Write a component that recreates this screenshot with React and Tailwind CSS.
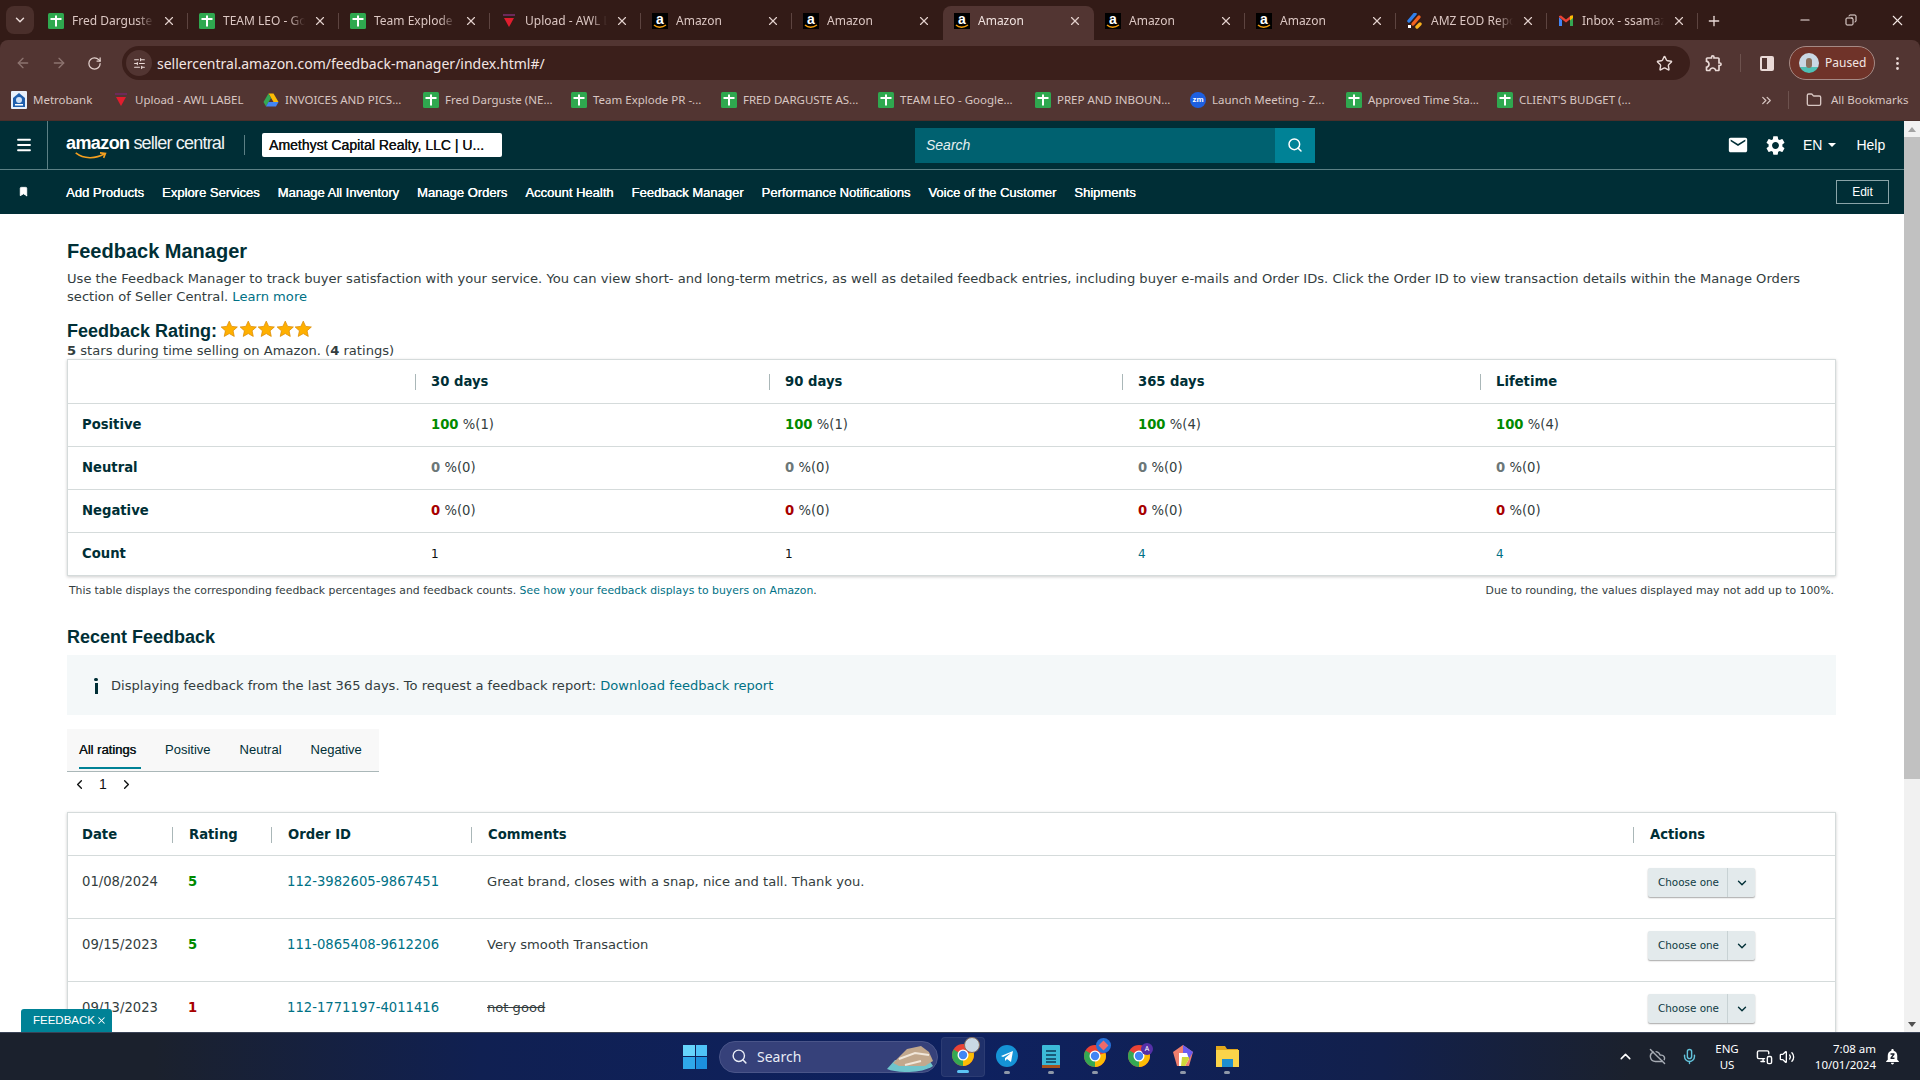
import React from "react";
import { ArrowLeft, ArrowRight, RotateCw, Star, X, Plus, Minus, ChevronDown, ChevronUp, ChevronLeft, ChevronRight, Menu, Search, Bookmark, Folder, ChevronsRight, EllipsisVertical, Mic, Volume2, CloudOff, MonitorSmartphone, SlidersHorizontal, Copy } from "lucide-react";
import { MdEmail, MdSettings, MdOutlineExtension, MdNotificationsPaused } from "react-icons/md";

const Sheets = () => (
  <svg width="16" height="16" viewBox="0 0 16 16" className="shrink-0">
    <rect x="0" y="0" width="16" height="16" rx="1.5" fill="#2fa84f" />
    <rect x="2.500" y="5" width="11" height="2" fill="#fff" />
    <rect x="7" y="2.500" width="2" height="11" fill="#fff" />
  </svg>
);
const Amz = () => (
  <span className="relative w-4 h-4 bg-black shrink-0 flex justify-center text-white font-bold text-[14px] leading-[13px] font-['Liberation_Sans',sans-serif]">
    a
    <svg width="14" height="5" viewBox="0 0 14 5" className="absolute left-[1px] bottom-0"><path d="M1 1c3 3 8 3 12 0" stroke="#f59e0b" strokeWidth="1.4" fill="none" /></svg>
  </span>
);
const Awl = () => (
  <svg width="16" height="16" viewBox="0 0 16 16" className="shrink-0">
    <rect x="2" y="1" width="12" height="2" fill="#6b2a5a" />
    <path d="M3 5h10l-5 9z" fill="#e11d2e" />
  </svg>
);
const Jira = () => (
  <svg width="16" height="16" viewBox="0 0 16 16" className="shrink-0">
    <path d="M2 8l6-7" stroke="#2f80ed" strokeWidth="3.4" strokeLinecap="round" />
    <path d="M6 11l6-7" stroke="#f2621f" strokeWidth="3.4" strokeLinecap="round" />
    <path d="M10 14l3-3" stroke="#f9b21d" strokeWidth="3.4" strokeLinecap="round" />
    <rect x="1" y="12" width="3" height="3" fill="#fff" />
  </svg>
);
const Gmail = () => (
  <svg width="16" height="16" viewBox="0 0 16 16" className="shrink-0">
    <path d="M1 4v9h3V7z" fill="#4285f4" />
    <path d="M15 4v9h-3V7z" fill="#34a853" />
    <path d="M1 4l7 5.5L15 4v-1l-2-.5L8 6.5 3 2.500 1 3z" fill="#ea4335" />
    <path d="M12 3l3-.8V5l-3 2.500z" fill="#fbbc04" />
  </svg>
);
const Drive = () => (
  <svg width="16" height="16" viewBox="0 0 16 16" className="shrink-0">
    <path d="M5.500 1.500h5L15.500 10h-5z" fill="#fbbc04" />
    <path d="M5.500 1.500 .5 10l2.500 4.500L8 6z" fill="#34a853" />
    <path d="M3 14.500h10L15.500 10H5.500z" fill="#4285f4" />
  </svg>
);
const Bank = () => (
  <svg width="16" height="18" viewBox="0 0 16 18" className="shrink-0">
    <rect x="0" y="0" width="16" height="18" rx="1" fill="#e8f0fb" />
    <path d="M8 2l6 5v9H2V7z" fill="#1f5fae" />
    <circle cx="8" cy="9" r="3" fill="#cfe0f5" />
    <rect x="4" y="13" width="8" height="1.500" fill="#fff" />
  </svg>
);
const Zoomi = () => (
  <span className="w-4 h-4 rounded-full bg-[#1d5fe0] shrink-0 flex items-center justify-center text-white text-[8px] font-bold leading-none font-['Liberation_Sans',sans-serif]">zm</span>
);

const tabs = [
  { i: <Sheets />, t: "Fred Darguste (NEW)" },
  { i: <Sheets />, t: "TEAM LEO - Google" },
  { i: <Sheets />, t: "Team Explode PR" },
  { i: <Awl />, t: "Upload - AWL LABEL" },
  { i: <Amz />, t: "Amazon" },
  { i: <Amz />, t: "Amazon" },
  { i: <Amz />, t: "Amazon", active: true },
  { i: <Amz />, t: "Amazon" },
  { i: <Amz />, t: "Amazon" },
  { i: <Jira />, t: "AMZ EOD Report" },
  { i: <Gmail />, t: "Inbox - ssamazon" },
];

const bookmarks = [
  { i: <Bank />, t: "Metrobank", w: "w-[102px]" },
  { i: <Awl />, t: "Upload - AWL LABEL", w: "w-[150px]" },
  { i: <Drive />, t: "INVOICES AND PICS...", w: "w-[160px]" },
  { i: <Sheets />, t: "Fred Darguste (NE...", w: "w-[148px]" },
  { i: <Sheets />, t: "Team Explode PR -...", w: "w-[150px]" },
  { i: <Sheets />, t: "FRED DARGUSTE AS...", w: "w-[157px]" },
  { i: <Sheets />, t: "TEAM LEO - Google...", w: "w-[157px]" },
  { i: <Sheets />, t: "PREP AND INBOUN...", w: "w-[155px]" },
  { i: <Zoomi />, t: "Launch Meeting - Z...", w: "w-[156px]" },
  { i: <Sheets />, t: "Approved Time Sta...", w: "w-[151px]" },
  { i: <Sheets />, t: "CLIENT'S BUDGET (...", w: "w-[150px]" },
];

const nav = ["Add Products", "Explore Services", "Manage All Inventory", "Manage Orders", "Account Health", "Feedback Manager", "Performance Notifications", "Voice of the Customer", "Shipments"];

const TabStrip = () => (
  <div className="h-10 bg-[#331b17] flex items-start shrink-0 font-['Noto_Sans',sans-serif] text-[12px] text-[#dcc7c3]">
    <div className="ml-[6px] mt-[6px] w-7 h-7 rounded-lg bg-[#4a2f2b] flex items-center justify-center shrink-0">
      <ChevronDown size={14} strokeWidth={2.5} className="text-[#eadad7]" />
    </div>
    <div className="ml-[3px] flex items-start">
      {tabs.map((t, n) => (
        <div key={n} className={`w-[151px] mt-[6px] flex items-center pl-[11px] shrink-0 ${t.active ? "bg-[#523532] rounded-t-lg h-[34px] pb-[4px] text-[#f0e2df]" : "h-[30px]"}`}>
          {t.i}
          <span className="ml-2 w-[82px] overflow-hidden whitespace-nowrap mb-[1px] [mask-image:linear-gradient(to_right,black_80%,transparent)]">{t.t}</span>
          <X size={14} strokeWidth={2} className="ml-auto mr-[11px] text-[#e2d0cc]" />
          <span className={`w-px h-[16px] ${n !== 5 && n !== 6 ? "bg-[#5d4440]" : "bg-transparent"}`} />
        </div>
      ))}
    </div>
    <Plus size={16} strokeWidth={2} className="ml-[8px] mt-[13px] text-[#eadad7]" />
    <div className="ml-auto flex h-10 items-center text-[#f5e8e5]">
      <div className="w-[46px] flex justify-center"><Minus size={14} /></div>
      <div className="w-[46px] flex justify-center"><Copy size={12} className="-scale-x-100" /></div>
      <div className="w-[46px] flex justify-center"><X size={17} strokeWidth={1.5} /></div>
    </div>
  </div>
);

const Toolbar = () => (
  <div className="h-10 bg-[#523532] rounded-t-lg flex items-end shrink-0 text-[#d9c3be] font-['Noto_Sans',sans-serif]">
    <div className="h-[34px] flex items-center shrink-0">
      <ArrowLeft size={16} className="ml-[15px] text-[#8d7470]" />
      <ArrowRight size={16} className="ml-[20px] text-[#8d7470]" />
      <RotateCw size={15} className="ml-[20px] text-[#e2d0cc]" />
    </div>
    <div className="ml-[20px] w-[1568px] h-[34px] rounded-full bg-[#3b1f1b] flex items-center pl-[4px] pr-[17px]">
      <div className="w-[26px] h-[26px] rounded-full bg-[#523532] flex items-center justify-center"><SlidersHorizontal size={13} className="text-[#eadad7]" /></div>
      <span className="ml-[5px] text-[14px] text-[#f3e6e3]">sellercentral.amazon.com/feedback-manager/index.html#/</span>
      <Star size={17} strokeWidth={2} className="ml-auto text-[#eadad7]" />
    </div>
    <div className="h-[34px] flex items-center">
      <MdOutlineExtension size={20} className="ml-[14px] text-[#eadad7]" />
      <span className="ml-[16px] w-px h-[18px] bg-[#6d524e]" />
      <span className="ml-[19px] w-[14px] h-[15px] border-2 border-[#eadad7] rounded-[2px] bg-[linear-gradient(to_right,transparent_50%,#eadad7_50%)]" />
    </div>
    <div className="ml-[15px] w-[86px] h-[34px] rounded-full bg-[#6f3329] border border-[#a58a85] flex items-center pl-[9px]">
      <span className="w-5 h-5 rounded-full bg-[linear-gradient(to_bottom,#c9d8e4_70%,#4fc1b5_70%)] flex justify-center items-center">
        <span className="w-[6px] h-[10px] bg-[#8a6f5c] rounded-sm" />
      </span>
      <span className="ml-[6px] text-[12px] text-[#f3e6e3]">Paused</span>
    </div>
    <div className="h-[34px] flex items-center"><EllipsisVertical size={17} className="ml-[14px] text-[#eadad7]" /></div>
  </div>
);

const Bookmarks = () => (
  <div className="h-[41px] bg-[#523532] border-b border-[#4a2f2b] flex items-center shrink-0 pl-[11px] font-['Noto_Sans',sans-serif] text-[11.500px] text-[#d8c6c2]">
    {bookmarks.map((b, n) => (
      <div key={n} className={`flex items-center shrink-0 ${b.w}`}>
        {b.i}
        <span className="ml-[6px] whitespace-nowrap">{b.t}</span>
      </div>
    ))}
    <ChevronsRight size={15} className="ml-[112px] text-[#d8c6c2]" />
    <span className="ml-[14px] w-px h-[18px] bg-[#6d524e]" />
    <Folder size={16} className="ml-[17px] text-[#d8c6c2]" />
    <span className="ml-[9px] whitespace-nowrap">All Bookmarks</span>
  </div>
);

const HeaderBar = () => (
  <div className="h-[48px] bg-[#002e36] border-b border-[#5c8085] box-content -mb-px flex items-center shrink-0 text-white font-['Liberation_Sans',sans-serif]">
    <div className="w-[48px] h-full border-r border-[#5c8085] flex items-center justify-center"><Menu size={18} strokeWidth={2.4} /></div>
    <div className="ml-[18px] w-[160px] relative flex items-baseline h-[30px] -mt-[5px] whitespace-nowrap">
      <span className="text-[18px] font-bold tracking-[-0.6px] leading-[30px]">amazon</span>
      <span className="ml-[4px] text-[18px] tracking-[-0.8px] leading-[30px] text-[#eef3f4]">seller central</span>
      <svg width="34" height="9" viewBox="0 0 36 10" className="absolute left-[8px] top-[24px]"><path d="M1 1c9 7 22 7 32 1M28 1l6 .5-2 5" stroke="#f5a01f" strokeWidth="1.800" fill="none" /></svg>
    </div>
    <span className="ml-[18px] w-px h-[20px] bg-[#5c8085]" />
    <div className="ml-[17px] w-[240px] h-[24px] bg-white rounded-[2px] text-[#0f1111] text-[14px] flex items-center pl-[7px] whitespace-nowrap [text-shadow:0.3px_0_0_#0f1111]">Amethyst Capital Realty, LLC | U...</div>
    <div className="ml-[413px] w-[400px] h-[35px] bg-[#006170] flex items-center">
      <span className="ml-[11px] italic text-[14px] text-[#e6f0f1]">Search</span>
      <div className="ml-auto w-10 h-full bg-[#008296] flex items-center justify-center"><Search size={16} strokeWidth={2.2} /></div>
    </div>
    <MdEmail size={22} className="ml-[412px]" />
    <MdSettings size={23} className="ml-[15px]" />
    <span className="ml-[16px] text-[14px]">EN</span>
    <span className="ml-[6px] w-0 h-0 border-x-[4px] border-x-transparent border-t-[4px] border-t-white" />
    <span className="ml-[20px] text-[14px]">Help</span>
  </div>
);

const NavBar = () => (
  <div className="h-[44px] mt-px bg-[#002e36] flex items-center shrink-0 text-white font-['Liberation_Sans',sans-serif]">
    <Bookmark size={11} fill="#fff" stroke="#fff" className="ml-[18px] -mt-[2px]" />
    <div className="ml-[37px] mt-[2px] flex gap-[18px]">
      {nav.map((n) => <span key={n} className="text-[13px] whitespace-nowrap [text-shadow:0.3px_0_0_#fff]">{n}</span>)}
    </div>
    <div className="ml-auto mr-[15px] -mt-[1px] w-[53px] h-[24px] border border-[#8aa4a8] flex items-center justify-center text-[12px]">Edit</div>
  </div>
);

const Pct = ({ v, n, c }) => (
  <span><b className={c}>{v}</b> %({n})</span>
);

const G = "text-[#008a00]";
const R = "text-[#a80000]";
const N = "text-[#6c7778]";

const summary = [
  { l: "Positive", c: G, v: "100", n: ["1", "1", "4", "4"] },
  { l: "Neutral", c: N, v: "0", n: ["0", "0", "0", "0"] },
  { l: "Negative", c: R, v: "0", n: ["0", "0", "0", "0"] },
];

const sumCols = "grid grid-cols-[347px_354px_353px_358px_1fr]";

const SummaryTable = () => (
  <div className="w-[1769px] border border-[#d5dbdb] shadow-[0_1px_3px_rgba(0,0,0,0.2)] bg-white text-[13.200px] text-[#0f1111]">
    <div className={`${sumCols} h-[43px] items-center font-bold text-[#002f36]`}>
      <span />
      {["30 days", "90 days", "365 days", "Lifetime"].map((h) => (
        <span key={h} className="h-[16px] flex items-center border-l border-[#aab7b8] pl-[15px]">{h}</span>
      ))}
    </div>
    {summary.map((r) => (
      <div key={r.l} className={`${sumCols} h-[43px] items-center border-t border-[#d5dbdb]`}>
        <b className="pl-[14px] text-[#002f36]">{r.l}</b>
        {r.n.map((n, i) => <span key={i} className="pl-[16px] text-[#333d3e]"><Pct v={r.v} n={n} c={r.c} /></span>)}
      </div>
    ))}
    <div className={`${sumCols} h-[43px] items-center border-t border-[#d5dbdb] text-[12px]`}>
      <b className="pl-[14px] text-[#002f36] text-[13.200px]">Count</b>
      <span className="pl-[16px] text-[#0f1111]">1</span>
      <span className="pl-[16px] text-[#0f1111]">1</span>
      <span className="pl-[16px] text-[#007185]">4</span>
      <span className="pl-[16px] text-[#007185]">4</span>
    </div>
  </div>
);

const feedCols = "grid grid-cols-[104px_99px_200px_1162px_1fr]";

const feed = [
  { d: "01/08/2024", r: "5", rc: G, o: "112-3982605-9867451", c: "Great brand, closes with a snap, nice and tall. Thank you." },
  { d: "09/15/2023", r: "5", rc: G, o: "111-0865408-9612206", c: "Very smooth Transaction" },
  { d: "09/13/2023", r: "1", rc: R, o: "112-1771197-4011416", c: "not good", s: true },
];

const Choose = () => (
  <div className="w-[107px] h-[29px] bg-[#e3eaec] rounded-[2px] shadow-[0_1px_1.500px_rgba(0,0,0,0.35)] flex items-center text-[10.400px] text-[#0f3b44]">
    <span className="w-[80px] pl-[10px] whitespace-nowrap border-r border-[#c8d2d4] h-full flex items-center">Choose one</span>
    <div className="flex-1 flex justify-center"><ChevronDown size={14} strokeWidth={2.4} className="text-[#002f36]" /></div>
  </div>
);

const FeedTable = () => (
  <div className="w-[1769px] border border-[#d5dbdb] shadow-[0_1px_3px_rgba(0,0,0,0.2)] bg-white text-[13.200px] text-[#333d3e]">
    <div className={`${feedCols} h-[42px] items-center font-bold text-[#002f36] pt-[2px]`}>
      <span className="pl-[14px]">Date</span>
      {["Rating", "Order ID", "Comments", "Actions"].map((h) => (
        <span key={h} className="h-[16px] flex items-center border-l border-[#aab7b8] pl-[16px]">{h}</span>
      ))}
    </div>
    {feed.map((f) => (
      <div key={f.o} className={`${feedCols} h-[63px] border-t border-[#d5dbdb]`}>
        <span className="pl-[14px] pt-[16px]">{f.d}</span>
        <b className={`pl-[16px] pt-[16px] ${f.rc}`}>{f.r}</b>
        <span className="pl-[16px] pt-[16px] text-[#007185]">{f.o}</span>
        <span className={`pl-[16px] pt-[16px] text-[13.100px] ${f.s ? "line-through" : ""}`}>{f.c}</span>
        <div className="pl-[15px] pt-[12px]"><Choose /></div>
      </div>
    ))}
  </div>
);

const Stars = () => (
  <span className="flex ml-[3px] -mt-[4px]">
    {[0, 1, 2, 3, 4].map((i) => (
      <svg key={i} width="18.500" height="18" viewBox="0 0 24 24"><path d="M12 1.500l3.200 7 7.600.8-5.700 5.100 1.600 7.500L12 18.100l-6.700 3.800 1.600-7.500L1.200 9.300l7.600-.8z" fill="#ffb000" stroke="#d98a00" strokeWidth="1" /></svg>
    ))}
  </span>
);

const Content = () => (
  <div className="flex-1 min-h-0 bg-white pl-[67px] font-['DejaVu_Sans',sans-serif] overflow-hidden">
    <h1 className="mt-[23px] h-[28px] leading-[28px] text-[20px] font-bold text-[#002f36] font-['Liberation_Sans',sans-serif]">Feedback Manager</h1>
    <p className="mt-[5px] w-[1769px] text-[13.100px] leading-[18px] text-[#333d3e]">
      Use the Feedback Manager to track buyer satisfaction with your service. You can view short- and long-term metrics, as well as detailed feedback entries, including buyer e-mails and Order IDs. Click the Order ID to view transaction details within the Manage Orders section of Seller Central. <span className="text-[#007185]">Learn more</span>
    </p>
    <div className="mt-[14px] h-[22px] flex items-center text-[18px] font-bold text-[#002f36] font-['Liberation_Sans',sans-serif]">Feedback Rating:<Stars /></div>
    <p className="h-[17px] text-[13.100px] leading-[18px] text-[#333d3e]"><b>5</b> stars during time selling on Amazon. (<b>4</b> ratings)</p>
    <SummaryTable />
    <div className="w-[1769px] h-[28px] pt-[2px] flex items-center justify-between px-[2px] text-[10.850px] text-[#333d3e]">
      <span>This table displays the corresponding feedback percentages and feedback counts. <span className="text-[#007185]">See how your feedback displays to buyers on Amazon</span>.</span>
      <span>Due to rounding, the values displayed may not add up to 100%.</span>
    </div>
    <h2 className="mt-[22px] h-[22px] leading-[22px] text-[18px] font-bold text-[#002f36] font-['Liberation_Sans',sans-serif]">Recent Feedback</h2>
    <div className="mt-[7px] w-[1769px] h-[60px] pt-[2px] bg-[#f4f8f9] flex items-center pl-[27px] text-[13.070px] text-[#333d3e]">
      <span className="w-[4px] h-[16px] flex flex-col items-center -mt-[1px]">
        <span className="w-[4px] h-[3px] bg-[#002f36] rounded-full" />
        <span className="w-[3px] h-[11px] mt-[2px] bg-[#002f36]" />
      </span>
      <span className="ml-[13px]">Displaying feedback from the last 365 days. To request a feedback report: <span className="text-[#007185]">Download feedback report</span></span>
    </div>
    <div className="mt-[14px] w-[312px] h-[43px] bg-[#f8f8f8] border-b border-[#aab7b8] flex pl-[12px] gap-[29px] text-[13px] font-['Liberation_Sans',sans-serif] text-[#002f36]">
      <span className="relative h-full leading-[41px] pr-[5px] -mr-[5px] [text-shadow:0.3px_0_0_#002f36] text-[#0f1111]">All ratings<span className="absolute left-0 right-0 bottom-[2px] h-[2px] bg-[#008296]" /></span>
      <span className="leading-[41px]">Positive</span>
      <span className="leading-[41px]">Neutral</span>
      <span className="leading-[41px]">Negative</span>
    </div>
    <div className="h-[24px] flex items-center pl-[5px] text-[14px] text-[#0f1111] font-['Liberation_Sans',sans-serif]">
      <ChevronLeft size={15} strokeWidth={2.2} />
      <span className="ml-[12px]">1</span>
      <ChevronRight size={15} strokeWidth={2.2} className="ml-[12px]" />
    </div>
    <div className="mt-[16px]"><FeedTable /></div>
  </div>
);

const Scrollbar = () => (
  <div className="w-4 bg-[#f1f1f1] flex flex-col items-center shrink-0">
    <div className="h-4 flex items-center"><span className="w-0 h-0 border-x-[4px] border-x-transparent border-b-[5px] border-b-[#a3a3a3]" /></div>
    <div className="w-full h-[642px] bg-[#c1c1c1]" />
    <div className="mt-auto h-4 flex items-center"><span className="w-0 h-0 border-x-[4px] border-x-transparent border-t-[5px] border-t-[#505050]" /></div>
  </div>
);

const Win = () => (
  <div className="grid grid-cols-2 gap-[1px] w-[24px] h-[24px]">
    <span className="bg-[#66d4fb]" /><span className="bg-[#4fc3f7]" /><span className="bg-[#2fa8ea]" /><span className="bg-[#1c90de]" />
  </div>
);

const Chrome = ({ badge }) => (
  <span className="relative w-6 h-6 block">
    <svg width="24" height="24" viewBox="0 0 24 24">
      <circle cx="12" cy="12" r="11" fill="#ea4335" />
      <path d="M12 12L22.500 9A11 11 0 0 1 12 23z" fill="#fbbc04" />
      <path d="M12 12L12 23A11 11 0 0 1 2.500 6.500z" fill="#34a853" />
      <circle cx="12" cy="12" r="5.500" fill="#fff" />
      <circle cx="12" cy="12" r="4.200" fill="#4285f4" />
    </svg>
    {badge}
  </span>
);

const Dot = ({ on }) => <span className={`block mx-auto mt-[3px] rounded-full ${on ? "w-3 h-[3px] bg-[#5cc4f5]" : "w-[6px] h-[3px] bg-[#8f98a8]"}`} />;

const Task = ({ children, on, dot = true }) => (
  <div className={`w-[44px] h-[40px] rounded flex flex-col items-center justify-end pb-[3px] ${on ? "bg-[#ffffff12] border border-[#ffffff10]" : ""}`}>
    <div className="h-[24px] flex items-center justify-center">{children}</div>
    {dot ? <Dot on={on} /> : <span className="h-[6px]" />}
  </div>
);

const Taskbar = () => (
  <div className="h-12 shrink-0 border-t border-[#3a4356] bg-[linear-gradient(to_right,#1b212d_0%,#1b212d_8%,#102052_25%,#0e2160_50%,#12204c_72%,#1b212d_85%,#1b212d_100%)] flex items-center text-white font-['Noto_Sans',sans-serif] relative">
    <div className="ml-[683px]"><Win /></div>
    <div className="ml-[12px] w-[219px] h-[32px] rounded-full bg-[#36417a] border border-[#4a5589] flex items-center pl-[11px] text-[#e8ecf5] text-[14px] relative overflow-hidden">
      <Search size={17} />
      <span className="ml-[9px]">Search</span>
      <svg width="50" height="30" viewBox="0 0 50 30" className="absolute right-[2px] top-[1px]">
        <path d="M2 26c10 4 34 5 46-3l-4-6H10z" fill="#6fc5cc" />
        <path d="M8 20L22 6l14-3 8 6 4 9-8 5H14z" fill="#c2a88d" />
        <path d="M14 16l16-6 14 2M20 22l16-4" stroke="#f1e7da" strokeWidth="2" fill="none" />
      </svg>
    </div>
    <div className="ml-[3px] flex">
      <Task on><Chrome badge={<span className="absolute -top-[6px] -right-[5px] w-4 h-4 rounded-full bg-[#c9d8e4] border border-[#8a6f5c]" />} /></Task>
      <Task>
        <svg width="22" height="22" viewBox="0 0 22 22"><circle cx="11" cy="11" r="11" fill="#1593d6" /><path d="M5 11l12-5-2 11-4-3-2 2v-3l6-5-8 4z" fill="#fff" /></svg>
      </Task>
      <Task>
        <svg width="18" height="24" viewBox="0 0 18 24"><rect width="18" height="23" y="1" rx="1" fill="#3cbad8" /><rect y="21" width="18" height="3" fill="#a5531e" /><path d="M4 7h10M4 11h10M4 15h10M4 18h10" stroke="#0e3c5a" strokeWidth="1.500" /></svg>
      </Task>
      <Task><Chrome badge={<span className="absolute -top-[6px] -right-[4px] w-[15px] h-[15px] rounded-full bg-[#2670d8] flex items-center justify-center"><span className="w-[7px] h-[7px] bg-[#f06a6a] rotate-45" /></span>} /></Task>
      <Task dot={false}><Chrome badge={<span className="absolute -top-[1px] -right-[2px] w-[12px] h-[12px] rounded-full bg-[#5530a8] text-[7px] text-center leading-[12px]">A</span>} /></Task>
      <Task>
        <svg width="24" height="24" viewBox="0 0 24 24"><path d="M12 1l10 7-4 14H6L2 8z" fill="#ef7e6d" /><path d="M12 1l10 7-4 7-6-6z" fill="#6a5cf0" /><path d="M8 9h8l2 6-4 7H8z" fill="#fff" /><path d="M11 13h7v2l-4 7h-4z" fill="#cfd83a" /></svg>
      </Task>
      <Task>
        <svg width="24" height="24" viewBox="0 0 24 24"><path d="M1 2h9l2 3h11v18H1z" fill="#e3a81b" /><rect x="1" y="6" width="23" height="17" fill="#fbd44a" /><rect x="7" y="15" width="11" height="8" fill="#1f8fd0" /></svg>
      </Task>
    </div>
    <ChevronUp size={17} strokeWidth={2.2} className="ml-[368px]" />
    <CloudOff size={17} className="ml-[15px] text-[#a7acb4]" />
    <Mic size={17} className="ml-[15px] text-[#63c4dc]" />
    <div className="ml-[7px] w-[44px] text-center text-[11.500px] leading-[16px]">ENG<br />US</div>
    <MonitorSmartphone size={17} className="ml-[7px]" />
    <Volume2 size={16} className="ml-[6px]" />
    <div className="ml-[19px] w-[62px] text-right text-[11.500px] leading-[16px] whitespace-nowrap flex flex-col items-end">
      <span>7:08 am</span>
      <span>10/01/2024</span>
    </div>
    <MdNotificationsPaused size={19} className="ml-[7px]" />
  </div>
);

export default function App() {
  return (
    <div className="h-screen w-screen flex flex-col overflow-hidden bg-[#331b17]">
      <TabStrip />
      <Toolbar />
      <Bookmarks />
      <div className="flex-1 min-h-0 flex relative">
        <div className="flex-1 min-w-0 flex flex-col">
          <HeaderBar />
          <NavBar />
          <Content />
        </div>
        <Scrollbar />
        <div className="absolute left-[21px] -bottom-px w-[91px] h-[24px] bg-[#008296] rounded-t-[3px] flex items-center pl-[12px] text-white text-[11.500px] font-['Liberation_Sans',sans-serif] whitespace-nowrap">
          FEEDBACK<X size={11} strokeWidth={2.2} className="ml-[1px] -mt-[2px]" />
        </div>
      </div>
      <Taskbar />
    </div>
  );
}
